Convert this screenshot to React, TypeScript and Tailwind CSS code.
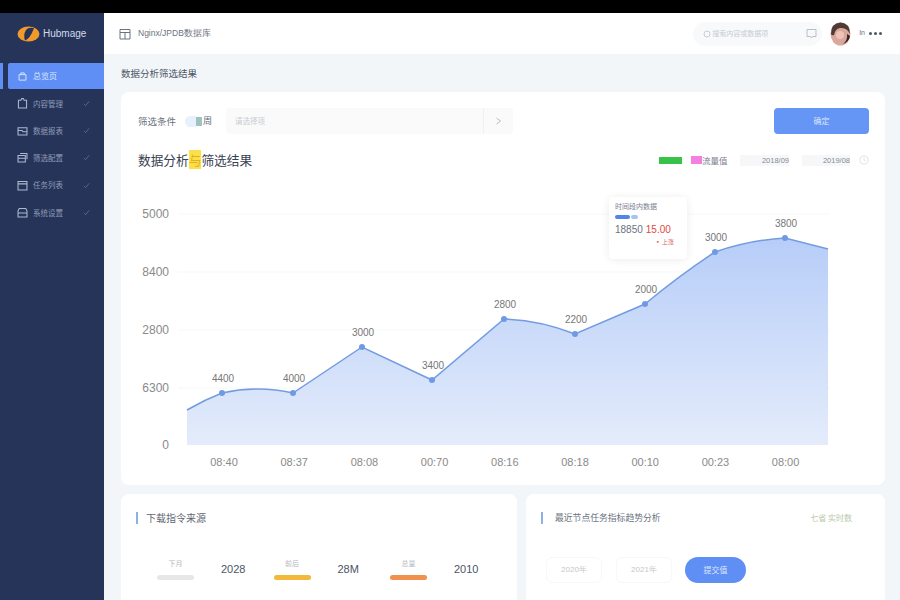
import React from "react";

const FONT = "font-['Noto_Sans_CJK_SC','Noto_Sans',sans-serif]";

const navItems = ["内容管理", "数据报表", "筛选配置", "任务列表", "系统设置"];

const NavIcon: React.FC<{ index: number }> = ({ index }) => {
  const shapes = [
    <path key="0" d="M3 4h3l1-2h2l1 2h3v9.5H3z" />,
    <path key="1" d="M2.5 4.500h11v9h-11zM2.5 8h5l1 1.5h5" />,
    <path key="2" d="M5 3h8.5v7M2.5 5.500h9v8h-9zM2.5 9h9" />,
    <path key="3" d="M2.5 3h11v10.500h-11zM2.5 6h11" />,
    <path key="4" d="M4 3h8l1.500 3v7.500h-11V6zM2.5 8.500h11" />,
  ];
  return (
    <svg width="13" height="13" viewBox="0 0 16 16" fill="none" stroke="#aeb8cf" strokeWidth="1.3">
      {shapes[index]}
    </svg>
  );
};

const Check = () => (
  <svg width="7" height="7" viewBox="0 0 8 8" fill="none" stroke="#5f6c8c" strokeWidth="1">
    <path d="M1 4.500 3 6.500 7 1.500" />
  </svg>
);

const Sidebar = () => (
  <aside className="w-[104px] shrink-0 bg-[#27345a] flex flex-col">
    <div className="h-[41px] flex items-center pl-[17px] gap-[3px]">
      <svg width="23" height="16" viewBox="0 0 23 16">
        <ellipse cx="11.5" cy="8" rx="11" ry="7.5" fill="#ef9a2b" />
        <path d="M8 14.500 Q13 13 17 2 Q11 1 9 4 Q6 9 8 14.500z" fill="#27345a" />
      </svg>
      <span className="text-[10px] text-[#d3d9e8] font-['Liberation_Sans',sans-serif] whitespace-nowrap">
        Hubmage
      </span>
    </div>
    <div className="h-[9px]" />
    <div className="h-[26px] flex">
      <div className="w-[3px] bg-[#5f8ff5]" />
      <div className="w-[5px]" />
      <div className="flex-1 bg-[#5f8ff5] rounded-l-[2px] flex items-center pl-[9px] gap-[5px]">
        <svg width="11" height="12" viewBox="0 0 16 16" fill="none" stroke="#dbe6ff" strokeWidth="1.4">
          <path d="M3 6h10v8H3zM5.500 6V3.500h5V6" />
        </svg>
        <span className={`text-[8px] text-[#dbe6ff] ${FONT}`}>总览页</span>
      </div>
    </div>
    <div className="flex flex-col pt-[0.5px]">
      {navItems.map((label, i) => (
        <div key={label} className="h-[27.3px] flex items-center pl-[16px] pr-[14px]">
          <NavIcon index={i} />
          <span className={`ml-[4px] flex-1 text-[7.5px] text-[#8f9bb8] ${FONT}`}>{label}</span>
          <Check />
        </div>
      ))}
    </div>
  </aside>
);

const Header = () => (
  <header className="h-[41px] bg-white flex items-center pl-[15px] pr-[18px] shrink-0">
    <svg width="12" height="12" viewBox="0 0 12 12" fill="none" stroke="#6b7280" strokeWidth="1">
      <path d="M1 1.500h10v9.500H1zM1 4.500h10M6 4.500V11" />
    </svg>
    <span className="ml-[7px] text-[8.5px] text-[#6b7280] font-['Liberation_Sans',sans-serif]">Nginx/JPDB数据库</span>
    <div className="ml-auto w-[129px] h-[24px] rounded-full bg-[#f8f9fa] flex items-center pl-[10px] pr-[5px]">
      <svg width="8" height="8" viewBox="0 0 8 8" fill="none" stroke="#c7ccd3" strokeWidth="1">
        <circle cx="4" cy="4" r="3" />
      </svg>
      <span className={`ml-[1px] text-[7px] text-[#c7ccd3] ${FONT} whitespace-nowrap`}>搜索内容或数据项</span>
      <svg className="ml-auto" width="11" height="11" viewBox="0 0 11 11" fill="none" stroke="#b8bdc5" strokeWidth="1">
        <path d="M1 1.500h9v7H6.500L5.500 10l-1-1.500H1z" />
      </svg>
    </div>
    <svg className="ml-[8px]" width="21" height="24" viewBox="0 0 21 24">
      <ellipse cx="10.5" cy="12" rx="10" ry="11.5" fill="#d9a79c" />
      <path d="M1 12Q1 1 10.500 .5 20 1 20 12 17 5 10 6 5 7 4 13 2 14 1 12z" fill="#4f3a36" />
      <circle cx="10" cy="13" r="4" fill="#eec4b8" />
      <path d="M13 22 Q18 18 17 12 L20 14 Q19 20 13 22z" fill="#2f2523" />
    </svg>
    <span className="ml-[8px] text-[7px] text-[#6b7280] font-['Liberation_Sans',sans-serif]">In</span>
    <div className="ml-[4px] flex gap-[2px]">
      <span className="w-[3px] h-[3px] rounded-full bg-[#4b5563]" />
      <span className="w-[3px] h-[3px] rounded-full bg-[#4b5563]" />
      <span className="w-[3px] h-[3px] rounded-full bg-[#4b5563]" />
    </div>
  </header>
);

const points: [number, number, string][] = [
  [222, 393, "4400"],
  [293, 393, "4000"],
  [362, 347, "3000"],
  [432, 380, "3400"],
  [504, 319, "2800"],
  [575, 334, "2200"],
  [645, 304, "2000"],
  [715, 252, "3000"],
  [785, 238, "3800"],
];

const curve =
  "M187 410 Q204 400 222 393 Q258 385 293 393 L362 347 L432 380 L504 319 Q540 320 575 334 L645 304 Q680 275 715 252 Q750 240 785 238 L828 249";

const Chart = () => (
  <div className="relative h-[285px] mt-[20px]">
    <svg className="block w-full h-full" viewBox="121 190 764 285" fill="none">
      <defs>
        <linearGradient id="area" x1="0" y1="0" x2="0" y2="1">
          <stop offset="0" stopColor="#b7cdf8" />
          <stop offset="1" stopColor="#e4ecfb" />
        </linearGradient>
      </defs>
      {[214, 272, 330, 388].map((y) => (
        <line key={y} x1="178" x2="830" y1={y} y2={y} stroke="#f6f7f8" strokeWidth="1" />
      ))}
      <path d={`${curve} L828 445 L187 445 Z`} fill="url(#area)" />
      <path d={curve} stroke="#739ce0" strokeWidth="1.5" />
      {points.map(([x, y, v]) => (
        <g key={x}>
          <circle cx={x} cy={y} r="3" fill="#6f9ae3" />
          <text x={x + 1} y={y - 11} textAnchor="middle" fontSize="10" fill="#777777" fontFamily="Liberation Sans">
            {v}
          </text>
        </g>
      ))}
      {[
        [214, "5000"],
        [272, "8400"],
        [330, "2800"],
        [388, "6300"],
        [445, "0"],
      ].map(([y, v]) => (
        <text key={y} x="169" y={Number(y) + 4} textAnchor="end" fontSize="12" fill="#8a8a8a" fontFamily="Liberation Sans">
          {v}
        </text>
      ))}
      {["08:40", "08:37", "08:08", "00:70", "08:16", "08:18", "00:10", "00:23", "08:00"].map((t, i) => (
        <text key={i} x={224 + i * 70.2} y="466" textAnchor="middle" fontSize="11" fill="#8a8a8a" fontFamily="Liberation Sans">
          {t}
        </text>
      ))}
    </svg>
    <div className="absolute left-[488px] top-[7px] w-[78px] h-[62px] bg-white rounded-[4px] shadow-[0_1px_8px_rgba(0,0,0,0.08)] pl-[6px] pt-[4px]">
      <div className={`text-[7px] leading-[10px] text-[#7b8190] ${FONT} whitespace-nowrap`}>时间段内数据</div>
      <div className="mt-[4px] flex items-center gap-[1px]">
        <span className="w-[15px] h-[4px] rounded-full bg-[#4f86e8]" />
        <span className="w-[7px] h-[4px] rounded-full bg-[#a5c4f5]" />
      </div>
      <div className="mt-[5px] flex gap-[3px] text-[10px] leading-[12px] font-['Liberation_Sans',sans-serif] whitespace-nowrap">
        <span className="text-[#6b7280]">18850</span>
        <span className="text-[#dc4a3f]">15.00</span>
      </div>
      <div className={`mt-[1px] pr-[13px] text-right text-[6px] leading-[10px] text-[#dc6a60] ${FONT}`}>▪ 上涨</div>
    </div>
  </div>
);

const MainCard = () => (
  <section className="bg-white rounded-[8px] h-[393px] ml-[17px] mr-[15px] shrink-0">
    <div className="flex items-center pl-[17px] pr-[16px] pt-[16px]">
      <span className={`text-[9.5px] text-[#6b7280] ${FONT}`}>筛选条件</span>
      <span className="ml-[9px] w-[11px] h-[11px] rounded-l-full bg-[#e8f0fb]" />
      <span className="w-[6px] h-[9px] bg-[#9ec3c0]" />
      <span className={`ml-[1px] text-[9px] text-[#5f6b7a] ${FONT}`}>周</span>
      <div className="ml-[14px] w-[287px] h-[26px] bg-[#fafafa] rounded-[3px] flex items-center pl-[9px]">
        <span className={`text-[7.5px] text-[#c9ccd1] ${FONT}`}>请选择项</span>
        <div className="ml-auto h-full w-[30px] border-l border-[#f0f0f0] flex items-center justify-center">
          <svg width="7" height="8" viewBox="0 0 7 8" fill="none" stroke="#b9bdc4" strokeWidth="1">
            <path d="M1.500 1 5.500 4 1.500 7" />
          </svg>
        </div>
      </div>
      <button className={`ml-auto w-[95px] h-[26px] rounded-[4px] bg-[#6595f5] text-[8px] text-[#dbe6ff] ${FONT}`}>
        确定
      </button>
    </div>
    <div className="flex items-center pl-[17px] pr-[16px] mt-[16px] h-[20px]">
      <h2 className={`text-[12.7px] text-[#374151] ${FONT}`}>
        数据分析<span className="bg-[#fde047] text-[#e0b020]">与</span>筛选结果
      </h2>
      <div className="ml-auto flex items-center">
        <span className="w-[23px] h-[7px] bg-[#37c24a]" />
        <span className="ml-[9px] w-[11px] h-[8px] bg-[#f37fe0]" />
        <span className={`w-[26px] text-[8.5px] leading-[11px] text-[#7b8190] ${FONT} whitespace-nowrap`}>流量值</span>
        <span className="ml-[12px] w-[49px] h-[11px] bg-[#f6f7f8] text-right text-[7.5px] leading-[11px] text-[#858b95] font-['Liberation_Sans',sans-serif]">
          2018/09
        </span>
        <span className="ml-[13px] w-[48px] h-[11px] bg-[#f6f7f8] text-right text-[7.5px] leading-[11px] text-[#858b95] font-['Liberation_Sans',sans-serif]">
          2019/08
        </span>
        <svg className="ml-[9px]" width="10" height="10" viewBox="0 0 11 11" fill="none" stroke="#d4d7dc" strokeWidth="0.8">
          <circle cx="5.5" cy="5.5" r="4.5" />
          <path d="M5.500 2.500v3l2 1.500" />
        </svg>
      </div>
    </div>
    <Chart />
  </section>
);

const bars = [
  { label: "下月", value: "2028", color: "bg-[#e6e7e9]" },
  { label: "前后", value: "28M", color: "bg-[#f3b93b]" },
  { label: "总量", value: "2010", color: "bg-[#f0924e]" },
];

const BottomCards = () => (
  <div className="flex gap-[9px] ml-[17px] mr-[15px] mt-[9px] h-[106px] shrink-0">
    <section className="w-[396px] bg-white rounded-t-[8px] pl-[15px] pt-[17px]">
      <div className="flex items-center">
        <span className="w-[2px] h-[12px] bg-[#8fb0e3]" />
        <span className={`ml-[8px] text-[10px] leading-[14px] text-[#5f6672] ${FONT}`}>下载指令来源</span>
      </div>
      <div className="flex mt-[33px]">
        {bars.map((b) => (
          <div key={b.label} className="w-[116.5px] flex items-center">
            <div className="w-[37px] ml-[21px] flex flex-col items-center">
              <span className={`text-[7px] leading-[10px] text-[#b5b9bf] ${FONT}`}>{b.label}</span>
              <span className={`mt-[7px] w-[37px] h-[5px] rounded-full ${b.color}`} />
            </div>
            <span className="ml-[27px] text-[11px] text-[#4b5563] font-['Liberation_Sans',sans-serif]">{b.value}</span>
          </div>
        ))}
      </div>
    </section>
    <section className="flex-1 bg-white rounded-t-[8px] pl-[15px] pr-[33px] pt-[17px]">
      <div className="flex items-center">
        <span className="w-[2px] h-[12px] bg-[#8fb0e3]" />
        <span className={`ml-[12px] text-[8.8px] leading-[14px] text-[#6b7280] ${FONT}`}>最近节点任务指标趋势分析</span>
        <span className={`ml-auto text-[8px] text-[#b9c9ab] ${FONT}`}>七省 实时数</span>
      </div>
      <div className="flex items-center mt-[32px] ml-[5px]">
        <span className="w-[56px] h-[26px] rounded-[6px] border border-[#f8f8f8] flex items-center justify-center text-[8px] text-[#c4c7cc] font-['Liberation_Sans',sans-serif]">
          2020年
        </span>
        <span className="ml-[14px] w-[56px] h-[26px] rounded-[6px] border border-[#f8f8f8] flex items-center justify-center text-[8px] text-[#c4c7cc] font-['Liberation_Sans',sans-serif]">
          2021年
        </span>
        <button className={`ml-[13px] w-[61px] h-[26px] rounded-full bg-[#5f8ff5] text-[8px] text-[#dbe6ff] ${FONT}`}>
          提交值
        </button>
      </div>
    </section>
  </div>
);

export default function App() {
  return (
    <div className="w-[900px] h-[600px] overflow-hidden bg-black flex flex-col">
      <div className="h-[13px] shrink-0" />
      <div className="flex flex-1 min-h-0">
        <Sidebar />
        <main className="flex-1 min-w-0 bg-[#f3f6f9] flex flex-col">
          <Header />
          <div className={`h-[38px] shrink-0 flex items-center pl-[17px] text-[9.5px] text-[#4b5563] ${FONT}`}>
            数据分析筛选结果
          </div>
          <MainCard />
          <BottomCards />
        </main>
      </div>
    </div>
  );
}
